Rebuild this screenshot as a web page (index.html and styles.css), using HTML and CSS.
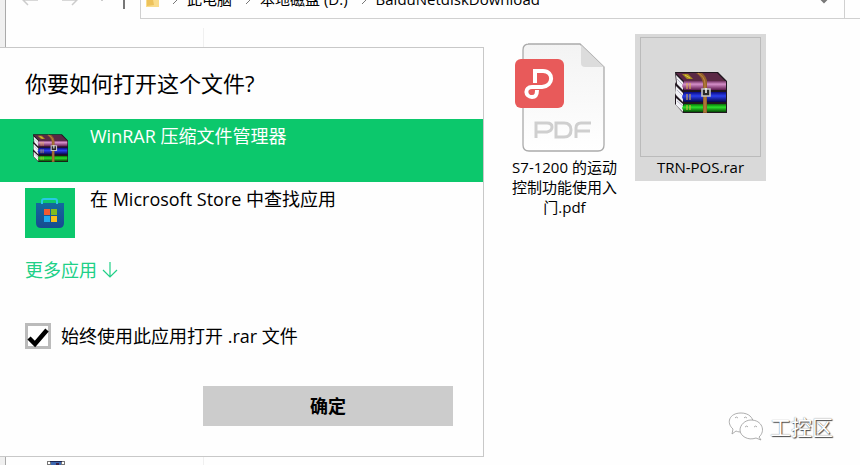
FILE: index.html
```html
<!DOCTYPE html>
<html lang="zh-CN">
<head>
    <meta charset="UTF-8">
    <meta name="viewport" content="width=device-width, initial-scale=1.0">
    <title>BaiduNetdiskDownload</title>
    <link rel="stylesheet" href="styles.css">
</head>
<body>

    <!-- Shared book stack icon -->
    <svg class="symbols" width="0" height="0" aria-hidden="true">
        <defs>
            <linearGradient id="purple" x1="0" y1="0" x2="0" y2="1">
                <stop offset="0" stop-color="#70305f"/>
                <stop offset="0.35" stop-color="#d58fc9"/>
                <stop offset="1" stop-color="#5c174c"/>
            </linearGradient>
            <linearGradient id="blue" x1="0" y1="0" x2="0" y2="1">
                <stop offset="0" stop-color="#0a0a80"/>
                <stop offset="0.4" stop-color="#2b3fee"/>
                <stop offset="1" stop-color="#05054c"/>
            </linearGradient>
            <linearGradient id="green" x1="0" y1="0" x2="0" y2="1">
                <stop offset="0" stop-color="#087008"/>
                <stop offset="0.4" stop-color="#2be02b"/>
                <stop offset="1" stop-color="#044804"/>
            </linearGradient>
        </defs>
        <symbol id="books" viewBox="0 0 52 42">
            <path d="M0 0h43l9 9v32H8L0 32v-9l1-2-1-9 1-2z" fill="#20161f"/>
            <path d="M1 1h41l8 8H9z" fill="#5b2845"/>
            <path d="M7 2h6l5 5h-6z" fill="#a98b20"/>
            <path d="M10 3l5 3" stroke="#e2cb45"/>
            <path d="M1 3l7 7v8L2 12zM1 14l7 7v9l-7-7zM1 26l7 6v8l-7-7z" fill="#f1f1f5"/>
            <path d="M2 7l6 6M2 18l6 6M2 29l6 5" stroke="#b5b5c5"/>
            <path d="M9 9h42v9H9l-2-4z" fill="url(#purple)"/>
            <path d="M9 20h42v10H9l-2-5z" fill="url(#blue)"/>
            <path d="M9 32h42v8H9l-2-4z" fill="url(#green)"/>
            <path d="M12 11v6M15 11v6M12 22v6M15 22v6M12 33v5M15 33v5" stroke="#e8ba42"/>
            <path d="M21 1h6q5 4 5 9v31h-4V11q-1-6-7-10z" fill="#94602b"/>
            <path d="M23 1q7 4 7 11v28" fill="none" stroke="#c08a45"/>
            <path d="M27 17h8v7h-8z" fill="#292929" stroke="#c5c5c5" stroke-width="1.6"/>
            <path d="M31 16v5" stroke="#eee" stroke-width="1.6"/>
        </symbol>
    </svg>

    <main class="explorer">
        <header class="toolbar">
            <div class="toolbar-row">
                <nav class="history">
                    <button type="button" class="icon-button" aria-label="后退">
                        <svg width="16" height="12" viewBox="0 0 16 12"><path d="M6 1L1 6l5 5M1 6h15" fill="none" stroke="#ccc" stroke-width="1.5"/></svg>
                    </button>
                    <button type="button" class="icon-button" aria-label="前进">
                        <svg width="16" height="12" viewBox="0 0 16 12"><path d="M10 1l5 5-5 5M15 6H0" fill="none" stroke="#ccc" stroke-width="1.5"/></svg>
                    </button>
                    <button type="button" class="icon-button" aria-label="最近浏览的位置">
                        <svg width="8" height="6" viewBox="0 0 8 6"><path d="M1 1l3 3 3-3" fill="none" stroke="#ccc"/></svg>
                    </button>
                    <button type="button" class="icon-button" aria-label="上移">
                        <svg width="12" height="18" viewBox="0 0 12 18"><path d="M6 18V1M1 6l5-5 5 5" fill="none" stroke="#777" stroke-width="2"/></svg>
                    </button>
                </nav>
                <div class="address">
                    <svg class="folder" width="13" height="14" viewBox="0 0 13 14"><path d="M0 0h9v3h4v11H0z" fill="#f9dc8b"/><path d="M1 1h5l2 11-7 1z" fill="#edc25b"/></svg>
                    <svg class="sep" width="6" height="10" viewBox="0 0 6 10"><path d="M1 1l4 4-4 4" fill="none" stroke="#777"/></svg>
                    <a href="#">此电脑</a>
                    <svg class="sep" width="6" height="10" viewBox="0 0 6 10"><path d="M1 1l4 4-4 4" fill="none" stroke="#777"/></svg>
                    <a href="#">本地磁盘 (D:)</a>
                    <svg class="sep" width="6" height="10" viewBox="0 0 6 10"><path d="M1 1l4 4-4 4" fill="none" stroke="#777"/></svg>
                    <a href="#">BaiduNetdiskDownload</a>
                    <button type="button" class="icon-button dropdown" aria-label="以前的位置">
                        <svg width="10" height="8" viewBox="0 0 10 8"><path d="M1 2l4 4 4-4" fill="none" stroke="#777" stroke-width="2"/></svg>
                    </button>
                </div>
                <div class="refresh"></div>
            </div>
        </header>

        <div class="content">
            <aside class="tree">
                <svg width="18" height="4" viewBox="0 0 18 4"><path d="M0 0h18v4H0z" fill="#777"/><path d="M1 1h2v2H1zM15 1h2v2h-2z" fill="#fff"/><path d="M4 1h10v3H4z" fill="#3e68b0"/><path d="M3 0h12v1H3z" fill="#1c2450"/><path d="M9 2h3v2H9z" fill="#3b2247"/></svg>
            </aside>
            <section class="files">
                <div class="file file-first">
                    <div class="thumb">
                        <svg width="104" height="112" viewBox="0 0 104 112">
                            <defs>
                                <linearGradient id="page" x1="0" y1="0" x2="0" y2="1">
                                    <stop offset="0" stop-color="#f3f3f3"/>
                                    <stop offset="1" stop-color="#fff"/>
                                </linearGradient>
                            </defs>
                            <path d="M15 3h52l24 23v78q0 6-6 6H16q-6 0-6-6V9q0-6 6-6z" fill="url(#page)" stroke="#aaa" stroke-width="1.3"/>
                            <path d="M68 4l23 22H72q-4 0-4-4z" fill="#dcdcdc"/>
                            <rect x="2" y="18" width="49" height="49" rx="6" fill="#e85a5a"/>
                            <path d="M22 42V30h8c11 0 11 15-1 16H19c-8 0-7 10 0 10 5 0 5-4 5-7" fill="none" stroke="#fff" stroke-width="4"/>
                            <path d="M23 97V82h11q5 0 5 4t-5 5H23M43 82h8q7 0 7 7t-7 7h-8zM63 97V87q0-5 5-5h10M63 90h14" fill="none" stroke="#cfcfcf" stroke-width="3"/>
                        </svg>
                    </div>
                    <div class="file-name">S7-1200 的运动控制功能使用入门.pdf</div>
                </div>
                <div class="file selected">
                    <div class="thumb">
                        <svg width="52" height="42"><use href="#books"/></svg>
                    </div>
                    <div class="file-name">TRN-POS.rar</div>
                </div>
            </section>
        </div>
    </main>

    <form class="dialog" role="dialog" aria-labelledby="dialogTitle">
        <h1 id="dialogTitle">你要如何打开这个文件?</h1>
        <button type="button" class="app active">
            <span class="app-icon"><svg width="35" height="29"><use href="#books"/></svg></span>
            <span>WinRAR 压缩文件管理器</span>
        </button>
        <button type="button" class="app">
            <span class="app-icon">
                <svg width="30" height="32" viewBox="0 0 30 32">
                    <defs>
                        <linearGradient id="bag" x1="0" y1="0" x2="0" y2="1">
                            <stop offset="0" stop-color="#126a9d"/>
                            <stop offset="1" stop-color="#174a91"/>
                        </linearGradient>
                    </defs>
                    <path d="M1 6h28v20q0 5-5 5H6q-5 0-5-5z" fill="url(#bag)"/>
                    <path d="M7 7V4q0-2 2-2h11q2 0 2 2v3" fill="none" stroke="#27c9e3" stroke-width="2"/>
                    <path d="M9 12h6v6H9z" fill="#f05a30"/>
                    <path d="M16 12h6v6h-6z" fill="#80bb20"/>
                    <path d="M9 19h6v6H9z" fill="#20a8ee"/>
                    <path d="M16 19h6v6h-6z" fill="#fbbd18"/>
                </svg>
            </span>
            <span>在 Microsoft Store 中查找应用</span>
        </button>
        <a href="#" class="more">更多应用
            <svg width="16" height="16" viewBox="0 0 16 16"><path d="M8 0v15M1 8l7 7 7-7" fill="none" stroke="currentColor" stroke-width="1.2"/></svg>
        </a>
        <div class="always">
            <span class="check">
                <input type="checkbox" id="alwaysUse" checked>
                <svg width="26" height="26" viewBox="0 0 26 26"><path d="M4 15l6 6L22 7" fill="none" stroke="#000" stroke-width="4.5"/></svg>
            </span>
            <label for="alwaysUse">始终使用此应用打开 .rar 文件</label>
        </div>
        <button type="button" class="ok">确定</button>
    </form>

    <div class="watermark">
        <svg width="36" height="30" viewBox="0 0 36 30" fill="#fff" stroke="#999" stroke-width="0.8">
            <path d="M14 20c-2 0-4 0-6-1l-4 3 1-5C-2 11 1 1 13 1c8 0 12 5 12 9"/>
            <path d="M31 25l2 3-5-2c-8 3-16-2-16-8 0-5 5-10 11-10 11 0 15 11 8 17z"/>
            <path d="M7 6q1-2 3 0M16 6q1-2 3 0M17 15q2-2 3 0M26 15q2-2 3 0" fill="none"/>
        </svg>
        <span>工控区</span>
    </div>

</body>
</html>
```

FILE: styles.css
```css
* {
    box-sizing: border-box;
}
body {
    margin: 0;
    position: relative;
    min-height: 100vh;
    overflow: hidden;
    background-color: #f0f0f0;
    color: #000;
    font-family: "Open Sans", "Noto Sans CJK SC", sans-serif;
    font-size: 15px;
}
button {
    font: inherit;
    color: inherit;
    border: none;
    background: none;
    padding: 0;
    cursor: pointer;
}
a {
    color: inherit;
    text-decoration: none;
}
svg {
    display: block;
    flex-shrink: 0;
}
.symbols {
    position: absolute;
}

/* Explorer window */
.explorer {
    display: flex;
    flex-direction: column;
    height: 100vh;
    margin-left: 5px;
    border-left: 1px solid #aaa;
    background-color: #fefefe;
}
.toolbar {
    display: flex;
    align-items: flex-end;
    height: 19px;
    overflow: hidden;
}
.toolbar-row {
    display: flex;
    flex: 1;
    height: 38px;
}
.history {
    display: flex;
    align-items: center;
    gap: 20px;
    width: 134px;
    padding-left: 16px;
}
.history .icon-button:nth-child(2) {
    margin-left: 4px;
}
.history .icon-button:last-child {
    margin-left: -8px;
}
.address {
    display: flex;
    flex: 1;
    align-items: center;
    padding: 0 15px 0 5px;
    border: 1px solid #d0d0d0;
    white-space: nowrap;
}
.address a {
    line-height: 20px;
    padding-bottom: 2px;
}
.sep {
    margin: 0 9px 0 13px;
}
.dropdown {
    margin-left: auto;
}
.refresh {
    width: 15px;
    border-bottom: 1px solid #d0d0d0;
}
.content {
    display: flex;
    flex: 1;
    padding-top: 9px;
}
.tree {
    display: flex;
    align-items: flex-end;
    width: 198px;
    padding-left: 41px;
    border-right: 1px solid #f0f0f0;
}
.files {
    display: grid;
    grid-template-columns: repeat(auto-fill, 131px);
    gap: 5px;
    flex: 1;
    align-content: start;
    padding: 6px 0 0 23px;
}
.file {
    display: flex;
    flex-direction: column;
    align-items: center;
    padding: 3px 5px 4px;
}
.file-first {
    grid-column-start: 3;
}
.selected {
    align-self: start;
    background-color: #d9d9d9;
}
.thumb {
    display: flex;
    align-items: center;
    justify-content: center;
    width: 100%;
    height: 120px;
    border: 1px solid transparent;
}
.selected .thumb {
    padding-bottom: 8px;
    border-color: #bbb;
}
.file-name {
    width: 116px;
    line-height: 20px;
    text-align: center;
}

/* Open with dialog */
.dialog {
    position: absolute;
    top: 47px;
    left: 0;
    display: flex;
    flex-direction: column;
    width: 484px;
    max-width: 100%;
    padding-bottom: 30px;
    border: 1px solid #c8c8c8;
    border-left: none;
    background-color: #fefefe;
    font-size: 18px;
    line-height: 26px;
}
h1 {
    margin: 0;
    padding: 19px 25px 20px;
    font-size: 22px;
    font-weight: normal;
    line-height: 32px;
}
.app {
    display: flex;
    align-items: flex-start;
    gap: 15px;
    min-height: 63px;
    padding: 4px 25px 6px;
    text-align: left;
}
.app.active {
    background-color: #0cc86c;
    color: #fff;
}
.app-icon {
    display: flex;
    align-items: center;
    justify-content: center;
    width: 50px;
    height: 50px;
}
.app:not(.active) .app-icon {
    margin-top: 2px;
    background-color: #0cc86c;
}
.more {
    display: flex;
    align-items: center;
    align-self: flex-start;
    gap: 5px;
    margin: 12px 25px 0;
    color: #20d087;
}
.always {
    display: flex;
    align-items: center;
    gap: 10px;
    margin: 40px 25px 0;
}
.check {
    display: grid;
}
.check input,
.check svg {
    grid-area: 1 / 1;
}
.check input {
    appearance: none;
    width: 26px;
    height: 26px;
    margin: 0;
    border: 3px solid #bbb;
    background-color: #fff;
}
.check svg {
    pointer-events: none;
    visibility: hidden;
}
.check input:checked + svg {
    visibility: visible;
}
.ok {
    align-self: flex-end;
    width: 250px;
    height: 40px;
    margin: 37px 30px 0 0;
    background-color: #ccc;
    font-weight: bold;
}

.watermark {
    position: absolute;
    right: 27px;
    bottom: 23px;
    display: flex;
    align-items: center;
    gap: 6px;
    color: #fff;
    font-size: 21px;
    line-height: 30px;
    text-shadow: 1px 1px 1px #444, 0 0 1px #777;
}
```
